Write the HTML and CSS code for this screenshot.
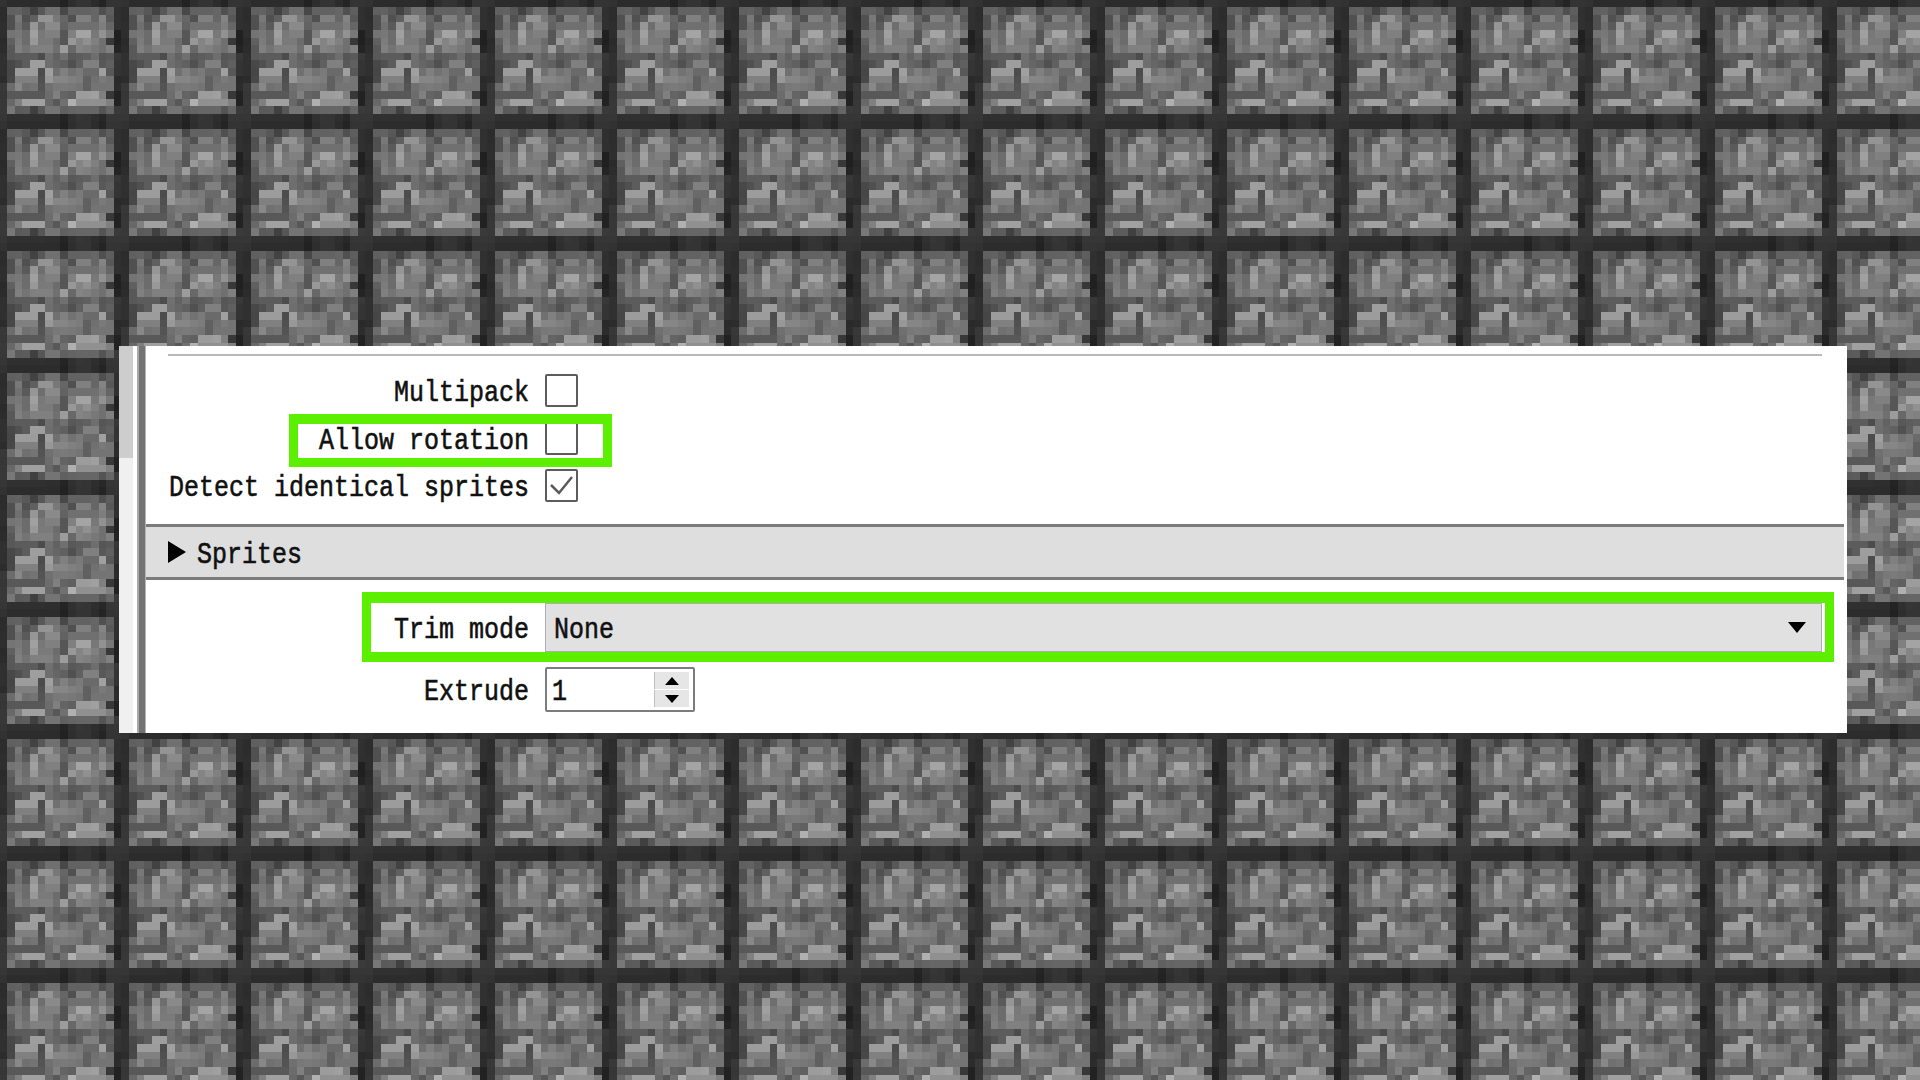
FILE: index.html
```html
<!DOCTYPE html>
<html lang="en">
<head>
  <meta charset="UTF-8" />
  <title>Sprite sheet settings</title>
  <link rel="stylesheet" href="styles.css">
</head>
<body>
  <svg class="wall" aria-hidden="true">
    <defs><pattern id="stone" x="7" y="7" width="122" height="122" patternUnits="userSpaceOnUse"></pattern></defs>
    <rect width="100%" height="100%" fill="url(#stone)"></rect>
  </svg>

  <div class="panel">
    <div class="scrollbar"><div class="scroll-thumb"></div></div>
    <div class="splitter"></div>
    <div class="content">
      <div class="rule"></div>

      <div class="checks">
        <div class="row">
          <span class="label"><span>Multipack</span></span>
          <span class="check"></span>
        </div>
        <div class="row">
          <span class="label"><span>Allow rotation</span></span>
          <span class="check"></span>
        </div>
        <div class="row">
          <span class="label"><span>Detect identical sprites</span></span>
          <span class="check">
            <svg viewBox="0 0 29 29" width="29" height="29"><path d="M4 14l8 8L25 6" fill="none" stroke="#5a5a5a" stroke-width="2.5"/></svg>
          </span>
        </div>
      </div>

      <div class="section">
        <svg class="section-arrow" viewBox="0 0 18 22" width="18" height="22"><path d="M0 0l18 11L0 22z"/></svg>
        <span class="label"><span>Sprites</span></span>
      </div>

      <div class="row row-select">
        <span class="label"><span>Trim mode</span></span>
        <div class="select">
          <span class="label"><span>None</span></span>
          <svg viewBox="0 0 18 11" width="18" height="11"><path d="M0 0h18L9 11z"/></svg>
        </div>
      </div>

      <div class="row row-spin">
        <span class="label"><span>Extrude</span></span>
        <div class="spin">
          <span class="label"><span>1</span></span>
          <div class="spin-btns">
            <div class="spin-btn"><svg viewBox="0 0 14 8" width="14" height="8"><path d="M7 0l7 8H0z"/></svg></div>
            <div class="spin-btn"><svg viewBox="0 0 14 8" width="14" height="8"><path d="M0 0h14L7 8z"/></svg></div>
          </div>
        </div>
      </div>
    </div>

    <div class="mark mark-rotation"></div>
    <div class="mark mark-trim"></div>
  </div>

  <script src="wall.js"></script>
</body>
</html>
```

FILE: styles.css
```css
html, body {
  margin: 0;
  height: 100%;
  overflow: hidden;
}
body {
  background: #2c2c2c;
  padding: 346px 73px 0 119px;
  box-sizing: border-box;
  font-family: "Liberation Mono", monospace;
  font-size: 25px;
  color: #111;
}
.wall {
  position: absolute;
  left: 0;
  top: 0;
  width: 100%;
  height: 100%;
  shape-rendering: crispEdges;
}

.panel {
  position: relative;
  display: flex;
  height: 387px;
  background: #fff;
}
.scrollbar {
  width: 14px;
  background: #f0f0f0;
}
.scroll-thumb {
  height: 112px;
  background: #cdcdcd;
}
.splitter {
  width: 9px;
  margin-left: 4px;
  background: #737373;
  border-left: 2px solid #a8a8a8;
  border-right: 1px solid #b4b4bc;
  box-sizing: border-box;
}
.content {
  flex: 1;
  min-width: 0;
}

.rule {
  height: 2px;
  margin: 8px 25px 0 22px;
  background: #b8b8b8;
}

.label {
  display: block;
  white-space: pre;
}
.label span {
  display: inline-block;
  transform: translateY(3px) scaleY(1.2);
  -webkit-text-stroke: 0.5px #111;
}

.checks {
  margin-top: 18px;
}
.row {
  display: flex;
  align-items: center;
  padding-left: 22px;
}
.row > .label {
  width: 361px;
  text-align: right;
  margin-right: 16px;
}
.checks .row {
  height: 33px;
  margin-bottom: 14.5px;
}
.check {
  width: 33px;
  height: 33px;
  box-sizing: border-box;
  border: 2px solid #5c5c5c;
  border-radius: 2px;
  background: #fff;
}
.check svg {
  display: block;
}

.section {
  display: flex;
  align-items: center;
  height: 56px;
  margin-top: 22px;
  margin-right: 3px;
  padding-left: 22px;
  box-sizing: border-box;
  background: #dedede;
  border-top: 3px solid #7c7c7c;
  border-bottom: 3px solid #7c7c7c;
}
.section-arrow {
  margin-right: 11px;
}

.row-select {
  margin-top: 23px;
  margin-right: 25px;
}
.select {
  flex: 1;
  display: flex;
  align-items: center;
  justify-content: space-between;
  height: 49px;
  padding: 0 15px 0 8px;
  box-sizing: border-box;
  background: #e1e1e1;
  border: 1px solid #adabb8;
}

.row-spin {
  margin-top: 15px;
}
.spin {
  display: flex;
  align-items: center;
  justify-content: space-between;
  width: 150px;
  height: 45px;
  padding: 0 4px 0 5px;
  box-sizing: border-box;
  border: 2px solid #7c7c7c;
  border-radius: 2px;
}
.spin-btns {
  display: flex;
  flex-direction: column;
  gap: 1px;
  width: 35px;
}
.spin-btn {
  display: flex;
  align-items: center;
  justify-content: center;
  height: 17px;
  background: #e6e6e6;
  border-left: 1px solid #c0c0c0;
}

.mark {
  position: absolute;
  box-sizing: border-box;
  border: 9px solid #5cf000;
}
.mark-rotation {
  left: 170px;
  top: 68px;
  width: 323px;
  height: 53px;
  border-top-width: 10px;
}
.mark-trim {
  left: 243px;
  top: 246px;
  width: 1472px;
  height: 70px;
  border-width: 11px 9px 10px;
}
```

FILE: wall.js
```js
// one stone tile, 16 x 16 texture cells, grey levels in hex
const tile = [
  '60 62 58 42 58 70 70 48 62 62 62 66 50 5e 30 2c',
  '50 78 50 60 94 94 78 66 50 80 80 66 84 58 30 2c',
  '50 70 5a 96 6e 8a 8a 62 70 70 70 70 7e 66 30 2e',
  '74 78 6c a0 78 80 80 56 80 a4 a4 78 92 78 20 2e',
  '60 7c 6c 98 7a 7a 6c 56 98 84 90 80 70 38 20 2a',
  '58 80 74 80 80 80 70 9c 68 84 80 78 70 80 24 2c',
  '58 5c 5c 5c 4c 70 62 70 58 5c 60 6e 56 5a 38 30',
  '48 50 5c 9e 9e 6e 66 60 50 60 80 80 58 60 34 30',
  '46 9c 9c 9c 4c a0 70 80 72 7a 6a 6a a0 58 34 30',
  '48 80 80 80 50 98 86 86 80 7c 60 70 7a 74 2a 2c',
  '6c 88 70 74 54 70 78 7a 78 74 60 74 74 74 2c 38',
  '58 58 58 58 58 6c 80 64 60 9c 9c a0 80 38 22 36',
  '68 80 a0 a0 a0 68 58 70 b0 90 90 90 90 80 22 38',
  '78 5a 5c 40 56 74 74 60 64 66 66 66 54 66 3a 38',
  '30 30 30 30 30 2e 2e 24 30 36 34 2e 28 36 36 36',
  '2c 2c 2c 2c 2c 2c 2c 22 2e 34 34 2c 24 34 34 32'
];

const stone = document.getElementById('stone');
const cell = 122 / 16;

tile.forEach((line, y) => {
  line.split(' ').forEach((grey, x) => {
    const r = document.createElementNS('http://www.w3.org/2000/svg', 'rect');
    r.setAttribute('x', x * cell);
    r.setAttribute('y', y * cell);
    r.setAttribute('width', cell + 0.5);
    r.setAttribute('height', cell + 0.5);
    r.setAttribute('fill', '#' + grey + grey + grey);
    stone.appendChild(r);
  });
});
```
